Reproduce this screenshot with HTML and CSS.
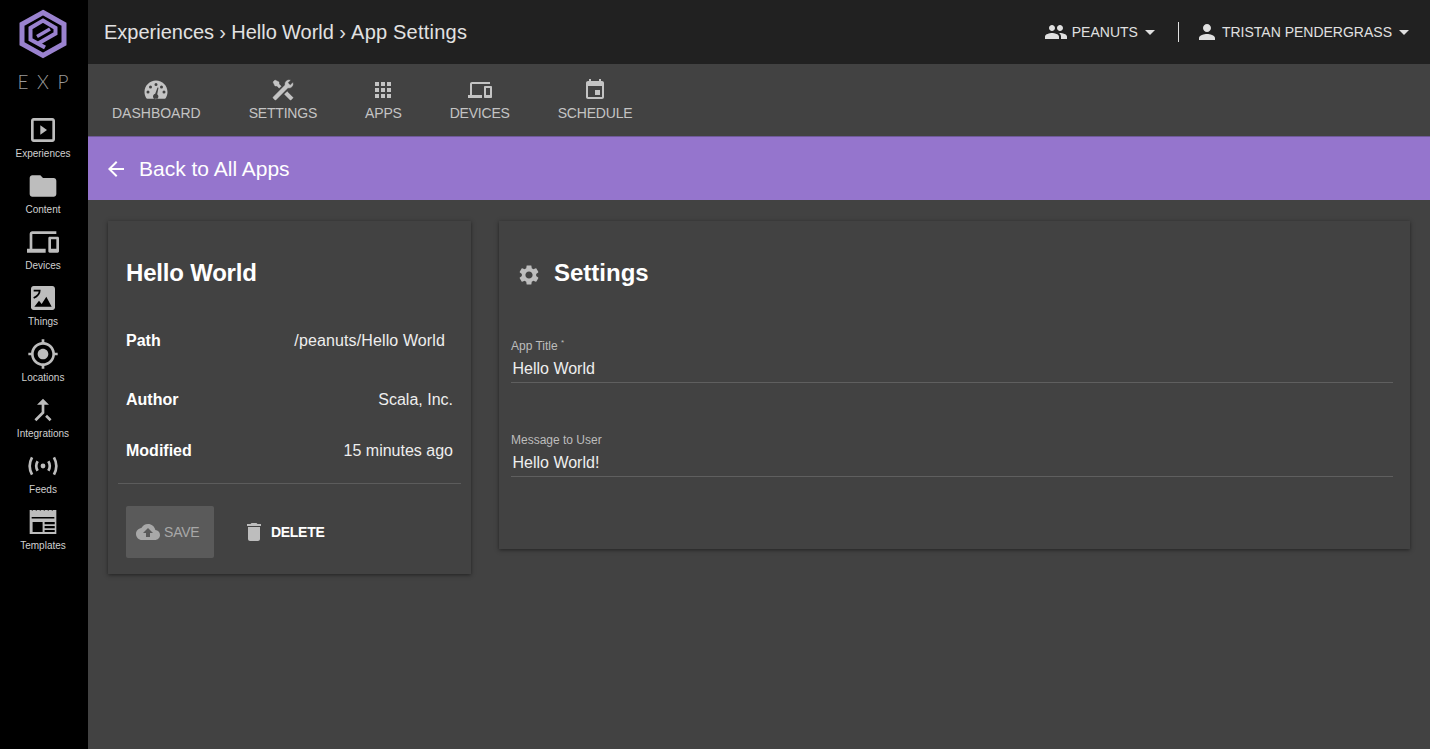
FILE: index.html
```html
<!DOCTYPE html>
<html lang="en">
<head>
<meta charset="utf-8">
<title>App Settings</title>
<link rel="stylesheet" href="styles.css">
</head>
<body>
<div class="app">
  <aside class="sidebar">
    <div class="brand">
      <svg class="logo" viewBox="0 0 66 60" width="66" height="60"><path d="M33 7.500 54 19.200V38.800L33 50.500 12 38.800V19.200Z" fill="none" stroke="#9a82cf" stroke-width="5"/><path d="M35 42.500 20.500 34.500V23L33 15.500 45.500 23V28.500L29 38" fill="none" stroke="#9a82cf" stroke-width="4"/><path d="M27 31.500 40 24" fill="none" stroke="#9a82cf" stroke-width="3.500"/></svg>
      <div class="brand-name">EXP</div>
    </div>
    <nav class="side-nav">
      <a class="side-item"><svg viewBox="0 0 24 24"><path d="M19 3H5c-1.100 0-2 .9-2 2v14c0 1.100.9 2 2 2h14c1.100 0 2-.9 2-2V5c0-1.100-.9-2-2-2zm0 16H5V5h14v14z"/><path d="M10 8.500v7l5-3.500z"/></svg><span>Experiences</span></a>
      <a class="side-item"><svg viewBox="0 0 24 24"><path d="M10 4H4c-1.100 0-1.990.9-1.990 2L2 18c0 1.100.9 2 2 2h16c1.100 0 2-.9 2-2V8c0-1.100-.9-2-2-2h-8l-2-2z"/></svg><span>Content</span></a>
      <a class="side-item"><svg viewBox="0 0 24 24"><path d="M4 6h18V4H4c-1.100 0-2 .9-2 2v11H0v3h14v-3H4V6zm19 2h-6c-.55 0-1 .45-1 1v10c0 .55.45 1 1 1h6c.55 0 1-.45 1-1V9c0-.55-.45-1-1-1zm-1 9h-4v-7h4v7z"/></svg><span>Devices</span></a>
      <a class="side-item"><svg viewBox="0 0 24 24"><path d="M21 19V5c0-1.100-.9-2-2-2H5c-1.100 0-2 .9-2 2v14c0 1.100.9 2 2 2h14c1.100 0 2-.9 2-2z"/><path d="M5.500 18.500 9 14l2 2.500L14.500 11l4 7.500z" fill="#000"/><path d="M5 6.500h4.500c0 2-1.500 4-4.500 5.500" fill="none" stroke="#000" stroke-width="1.300"/></svg><span>Things</span></a>
      <a class="side-item"><svg viewBox="0 0 24 24"><path d="M12 8c-2.210 0-4 1.790-4 4s1.790 4 4 4 4-1.790 4-4-1.790-4-4-4zm8.940 3c-.46-4.170-3.770-7.480-7.940-7.940V1h-2v2.060C6.830 3.520 3.520 6.830 3.060 11H1v2h2.060c.46 4.170 3.770 7.480 7.940 7.940V23h2v-2.060c4.170-.46 7.480-3.770 7.940-7.940H23v-2h-2.060zM12 19c-3.870 0-7-3.130-7-7s3.130-7 7-7 7 3.130 7 7-3.130 7-7 7z"/></svg><span>Locations</span></a>
      <a class="side-item"><svg viewBox="0 0 24 24"><path d="M17 20.410 18.410 19 15 15.590 13.590 17 17 20.410zM7.500 8H11v5.590L5.590 19 7 20.410l6-6V8h3.500L12 3.500 7.500 8z"/></svg><span>Integrations</span></a>
      <a class="side-item"><svg viewBox="0 0 24 24"><circle cx="12" cy="12" r="1.800"/><path d="M8 8.500Q5.800 12 8 15.500M16 8.500Q18.200 12 16 15.500M3.800 5.500Q.2 12 3.800 18.500M20.200 5.500Q23.800 12 20.200 18.500" fill="none" stroke="#bdbdbd" stroke-width="2"/></svg><span>Feeds</span></a>
      <a class="side-item"><svg viewBox="0 0 24 24"><path d="M2 3h20v18H2z"/><path d="M3.500 3h1M6.500 3h1M9.500 3h1M12.500 3h1M15.500 3h1M18.500 3h1" stroke="#000" stroke-width=".8"/><path d="M3.500 8.300h17v1h-17zM4.200 12h7.500v7.500H4.200zM13.200 12h7.600v1.600h-7.600zM13.200 15h7.600v1.600h-7.600zM13.200 18h7.600v1.500h-7.600z" fill="#000"/></svg><span>Templates</span></a>
    </nav>
  </aside>
  <div class="main">
    <header class="topbar">
      <div class="crumbs">Experiences › Hello World › <span class="crumb-last">App Settings</span></div>
      <div class="account">
        <div class="menu"><svg class="ic-24" viewBox="0 0 24 24"><path d="M16 11c1.660 0 2.990-1.340 2.990-3S17.660 5 16 5c-1.660 0-3 1.340-3 3s1.340 3 3 3zm-8 0c1.660 0 2.990-1.340 2.990-3S9.660 5 8 5C6.340 5 5 6.340 5 8s1.340 3 3 3zm0 2c-2.330 0-7 1.170-7 3.500V19h14v-2.500c0-2.330-4.670-3.500-7-3.500zm8 0c-.29 0-.62.02-.97.05 1.160.84 1.970 1.970 1.970 3.450V19h6v-2.500c0-2.330-4.670-3.500-7-3.500z"/></svg><span>PEANUTS</span><i class="caret"></i></div>
        <div class="divider"></div>
        <div class="menu"><svg class="ic-24 ic-person" viewBox="0 0 24 24"><path d="M12 12c2.210 0 4-1.790 4-4s-1.790-4-4-4-4 1.790-4 4 1.790 4 4 4zm0 2c-2.670 0-8 1.340-8 4v2h16v-2c0-2.660-5.330-4-8-4z"/></svg><span>TRISTAN PENDERGRASS</span><i class="caret"></i></div>
      </div>
    </header>
    <nav class="tabs">
      <a class="tab tab-wide"><svg viewBox="0 0 24 24"><path fill-rule="evenodd" d="M12 2.500C5.600 2.500.5 7.700.5 14c0 2.300.7 4.500 1.800 6.200.3.300.6.500 1 .5h17.400c.4 0 .7-.2 1-.5 1.100-1.700 1.800-3.900 1.800-6.200 0-6.300-5.100-11.500-11.500-11.500zM12 5a1.500 1.500 0 1 1 0 3 1.500 1.500 0 0 1 0-3zM6.500 7.500a1.500 1.500 0 1 1 0 3 1.500 1.500 0 0 1 0-3zM17.500 7.500a1.500 1.500 0 1 1 0 3 1.500 1.500 0 0 1 0-3zM4 12.500a1.500 1.500 0 1 1 0 3 1.500 1.500 0 0 1 0-3zM20 12.500a1.500 1.500 0 1 1 0 3 1.500 1.500 0 0 1 0-3zM13.500 9.500l1 .3-1.300 6.400a2.700 2.700 0 1 1-2-.4z"/></svg><span>DASHBOARD</span></a>
      <a class="tab"><svg class="ic-tools" viewBox="0 0 24 24"><path d="M21.710 20.290 20.290 21.710A1 1 0 0 1 18.880 21.710L7 9.850A3.810 3.810 0 0 1 6 10A4 4 0 0 1 2.220 4.700L4.760 7.240 5.290 6.710 6.710 5.290 7.240 4.760 4.700 2.220A4 4 0 0 1 10 6A3.810 3.810 0 0 1 9.850 7L21.710 18.880A1 1 0 0 1 21.710 20.290M2.290 18.880A1 1 0 0 0 2.290 20.290L3.710 21.710A1 1 0 0 0 5.120 21.710L10.590 16.250 7.760 13.420M20 2 16 4V6L13.830 8.170 15.830 10.170 18 8H20L22 4Z"/></svg><span>SETTINGS</span></a>
      <a class="tab"><svg viewBox="0 0 24 24"><path d="M4 8h4V4H4v4zm6 12h4v-4h-4v4zm-6 0h4v-4H4v4zm0-6h4v-4H4v4zm6 0h4v-4h-4v4zm6-10v4h4V4h-4zm-6 4h4V4h-4v4zm6 6h4v-4h-4v4zm0 6h4v-4h-4v4z"/></svg><span>APPS</span></a>
      <a class="tab"><svg viewBox="0 0 24 24"><path d="M4 6h18V4H4c-1.100 0-2 .9-2 2v11H0v3h14v-3H4V6zm19 2h-6c-.55 0-1 .45-1 1v10c0 .55.45 1 1 1h6c.55 0 1-.45 1-1V9c0-.55-.45-1-1-1zm-1 9h-4v-7h4v7z"/></svg><span>DEVICES</span></a>
      <a class="tab"><svg viewBox="0 0 24 24"><path d="M17 12h-5v5h5v-5zM16 1v2H8V1H6v2H5c-1.110 0-1.990.9-1.990 2L3 19c0 1.100.89 2 2 2h14c1.100 0 2-.9 2-2V5c0-1.100-.9-2-2-2h-1V1h-2zm3 18H5V8h14v11z"/></svg><span>SCHEDULE</span></a>
    </nav>
    <div class="backbar"><svg class="ic-back" viewBox="0 0 24 24"><path d="M20 11H7.830l5.590-5.590L12 4l-8 8 8 8 1.410-1.410L7.830 13H20v-2z"/></svg><span>Back to All Apps</span></div>
    <div class="content">
      <section class="card info">
        <h2 class="info-title">Hello World</h2>
        <div class="row row-path"><b>Path</b><span>/peanuts/Hello World</span></div>
        <div class="row row-author"><b>Author</b><span>Scala, Inc.</span></div>
        <div class="row row-mod"><b>Modified</b><span>15 minutes ago</span></div>
        <div class="actions">
          <button class="btn btn-save"><svg viewBox="0 0 24 24"><path d="M19.350 10.040C18.670 6.590 15.640 4 12 4 9.110 4 6.600 5.640 5.350 8.040 2.340 8.360 0 10.910 0 14c0 3.310 2.690 6 6 6h13c2.760 0 5-2.240 5-5 0-2.640-2.050-4.780-4.650-4.960zM14 13v4h-4v-4H7l5-5 5 5h-3z"/></svg>SAVE</button>
          <button class="btn btn-delete"><svg viewBox="0 0 24 24"><path d="M6 19c0 1.100.9 2 2 2h8c1.100 0 2-.9 2-2V7H6v12zM19 4h-3.500l-1-1h-5l-1 1H5v2h14V4z"/></svg>DELETE</button>
        </div>
      </section>
      <section class="card settings">
        <h2 class="settings-title"><svg viewBox="0 0 24 24"><path d="M19.140 12.940c.04-.3.06-.61.06-.94 0-.32-.02-.64-.07-.94l2.030-1.580c.18-.14.23-.41.12-.61l-1.920-3.320c-.12-.22-.37-.29-.59-.22l-2.390.96c-.5-.38-1.030-.7-1.620-.94l-.36-2.540c-.04-.24-.24-.41-.48-.41h-3.840c-.24 0-.43.17-.47.41l-.36 2.540c-.59.24-1.130.57-1.620.94l-2.390-.96c-.22-.08-.47 0-.59.22L2.740 8.870c-.12.21-.08.47.12.61l2.030 1.580c-.05.3-.09.63-.09.94s.02.64.07.94l-2.030 1.580c-.18.14-.23.41-.12.61l1.920 3.320c.12.22.37.29.59.22l2.390-.96c.5.38 1.030.7 1.620.94l.36 2.540c.05.24.24.41.48.41h3.840c.24 0 .44-.17.47-.41l.36-2.540c.59-.24 1.130-.56 1.620-.94l2.390.96c.22.08.47 0 .59-.22l1.920-3.320c.12-.22.07-.47-.12-.61l-2.010-1.580zM12 15.600c-1.980 0-3.600-1.620-3.600-3.600s1.620-3.600 3.600-3.600 3.600 1.620 3.600 3.600-1.620 3.600-3.600 3.600z"/></svg>Settings</h2>
        <div class="field"><label>App Title <sup>*</sup></label><div class="value">Hello World</div></div>
        <div class="field"><label>Message to User</label><div class="value">Hello World!</div></div>
      </section>
    </div>
  </div>
</div>
</body>
</html>
```
FILE: styles.css
```css
* { box-sizing: border-box; }
html, body { margin: 0; height: 100%; overflow: hidden; }
body { font-family: "Liberation Sans", Arial, sans-serif; background: #424242; color: #fff; }
svg { fill: currentColor; display: block; flex: none; }
.app { display: flex; height: 749px; }

.sidebar { width: 88px; flex: none; background: #000; color: #bdbdbd; display: flex; flex-direction: column; align-items: center; padding-right: 2px; }
.brand { height: 114px; padding-top: 5px; display: flex; flex-direction: column; align-items: center; }
.brand-name { font-family: Lato, "Liberation Sans", sans-serif; font-weight: 300; font-size: 19px; letter-spacing: 8.500px; margin: 6px 0 0 8.500px; line-height: 22px; color: #9a9a9a; }
.side-nav { display: flex; flex-direction: column; width: 100%; }
.side-item { height: 56px; display: flex; flex-direction: column; align-items: center; }
.side-item svg { width: 32px; height: 32px; }
.side-item span { font-size: 10px; line-height: 12px; margin-top: 2px; color: #d0d0d0; }

.main { flex: 1; min-width: 0; display: flex; flex-direction: column; }
.topbar { height: 64px; background: #212121; display: flex; align-items: center; justify-content: space-between; padding: 0 21px 0 16px; }
.crumbs { font-size: 20px; word-spacing: -.3px; color: #e2e2e2; }
.crumb-last { letter-spacing: .25px; }
.account { display: flex; align-items: center; color: #e0e0e0; font-size: 14px; }
.menu { display: flex; align-items: center; }
.ic-24 { width: 24px; height: 24px; margin-right: 4px; }
.ic-person { margin-right: 3px; }
.caret { width: 0; height: 0; border: 5px solid transparent; border-top-color: #e0e0e0; border-bottom: 0; margin-left: 7px; }
.divider { width: 1px; height: 20px; background: #e0e0e0; margin: 0 16px 0 23px; }

.tabs { height: 73px; padding: 14px 0 0 0; display: flex; border-bottom: 1px solid #6f5a99; color: #c4c4c4; }
.tab { display: flex; flex-direction: column; align-items: center; padding: 0 24px; }
.tab svg { width: 24px; height: 24px; }
.ic-tools { transform: scaleX(-1); stroke: currentColor; stroke-width: .4; }
.tab span { font-size: 14px; line-height: 16px; margin-top: 3px; letter-spacing: -.2px; }
.tab-wide span { letter-spacing: 0; }

.backbar { height: 63px; background: #9575cd; display: flex; align-items: center; padding-left: 16px; font-size: 21px; color: #fff; }
.ic-back { width: 24px; height: 24px; margin-right: 11px; }

.content { flex: 1; display: flex; align-items: flex-start; gap: 28px; padding: 21px 20px 0; }
.card { background: #424242; box-shadow: 0 1px 4px rgba(0,0,0,.5); }
.info { width: 363px; height: 353px; padding: 0 10px; flex: none; }
.info-title { font-size: 24px; line-height: 28px; margin: 38px 8px 0; font-weight: 700; letter-spacing: -.2px; }
.row { display: flex; justify-content: space-between; padding: 0 8px; font-size: 16px; line-height: 20px; }
.row b { font-weight: 700; }
.row span { color: #eee; }
.row-path { margin-top: 44px; }
.row-path span { margin-right: 8px; letter-spacing: .12px; }
.row-author { margin-top: 39px; }
.row-mod { margin-top: 31px; }
.actions { margin-top: 22px; border-top: 1px solid #5c5c5c; padding: 22px 8px 0; display: flex; gap: 16px; }
.btn { height: 52px; border: 0; border-radius: 2px; background: none; color: #fff; font: 700 14px "Liberation Sans", Arial, sans-serif; display: flex; align-items: center; padding: 0; }
.btn-save { width: 88px; background: #5a5a5a; color: #a8a8a8; padding-left: 10px; gap: 4px; font-weight: 400; letter-spacing: -.2px; }
.btn-save svg { width: 24px; height: 24px; }
.btn-delete { width: 96px; padding-left: 12px; gap: 5px; letter-spacing: -.3px; }
.btn-delete svg { width: 24px; height: 24px; color: #bdbdbd; }

.settings { flex: 1; height: 328px; padding: 0 17px 0 12px; }
.settings-title { font-size: 24px; line-height: 28px; margin: 38px 0 0 6px; font-weight: 700; display: flex; align-items: center; gap: 13px; }
.settings-title svg { width: 24px; height: 24px; color: #bdbdbd; margin-top: 4px; }
.field { border-bottom: 1px solid #5f5f5f; height: 44px; }
.settings-title + .field { margin-top: 52px; }
.field + .field { margin-top: 50px; }
.field label { display: block; font-size: 12px; line-height: 14px; color: #bdbdbd; }
.field sup { font-size: 8px; line-height: 0; }
.field .value { font-size: 16px; line-height: 20px; margin: 6px 0 0 1.500px; color: #eee; }
```
